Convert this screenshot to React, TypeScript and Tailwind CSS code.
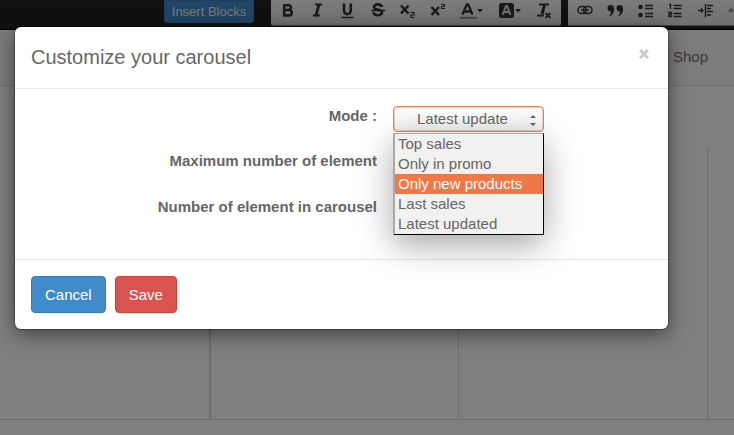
import React, { useState } from "react";

const modes = ["Top sales", "Only in promo", "Only new products", "Last sales", "Latest updated"];

function Tool({ label, children, width = "w-4" }: { label: string; children: React.ReactNode; width?: string }) {
  return (
    <button type="button" aria-label={label} className={`h-4 ${width} shrink-0 text-[#333]`}>
      {children}
    </button>
  );
}

function Icon({ children, w = 16 }: { children: React.ReactNode; w?: number }) {
  return (
    <svg width={w} height="16" viewBox={`0 0 ${w} 16`} fill="none" stroke="currentColor" strokeWidth="2" className="block">
      {children}
    </svg>
  );
}

function Toolbar() {
  return (
    <div className="flex h-[30px] items-start overflow-hidden border-b border-black bg-[#222]">
      <button
        type="button"
        className="ml-[164px] mr-[17px] h-[23px] w-[90px] shrink-0 whitespace-nowrap rounded-b-[3px] border border-[#357ebd] bg-[#428bca] text-[13px] leading-5 text-[#eee]"
      >
        Insert Blocks
      </button>
      <div className="mr-[7px] flex h-[26px] w-[290px] shrink-0 gap-[14px] rounded-b-[2px] border-b border-[#888] bg-linear-to-b from-[#f8f8f8] to-[#e0e0e0] pl-2 pt-[3px]">
        <Tool label="Bold">
          <Icon>
            <path d="M5.200 2v10.500M4 2.200h5.500a2.300 2.300 0 0 1 0 4.800H5h5a2.600 2.600 0 0 1 0 5.400H4" strokeWidth="2.600" />
          </Icon>
        </Tool>
        <Tool label="Italic">
          <Icon>
            <path d="M6 1.500h7M4 12.500h7" />
            <path d="M10 1.500 7 12.500" strokeWidth="2.800" />
          </Icon>
        </Tool>
        <Tool label="Underline">
          <Icon>
            <path d="M5 .5v7.300a3.200 3.200 0 0 0 6.800 0V.5" strokeWidth="2.600" />
            <path d="M2.500 14.500h12" strokeWidth="1.500" />
          </Icon>
        </Tool>
        <Tool label="Strikethrough">
          <Icon>
            <path d="M13 4C12 .5 5 .5 5 4c0 3.800 8 1.800 8 5.300 0 4-8 3.700-8.500 0" strokeWidth="2.600" />
            <path d="M2 7.500h14" strokeWidth="1.500" />
          </Icon>
        </Tool>
        <Tool label="Subscript">
          <Icon>
            <path d="m2 2.500 7.500 8M9.500 2.500l-7.500 8" strokeWidth="2.500" />
            <path d="M11.500 9.500H15V12h-3v2.500h3.500" strokeWidth="1.200" />
          </Icon>
        </Tool>
        <Tool label="Superscript">
          <Icon>
            <path d="m2.500 4 7.500 8M10 4l-7.500 8" strokeWidth="2.500" />
            <path d="M12 1.500h3.500v2h-3v2H16" strokeWidth="1.200" />
          </Icon>
        </Tool>
        <Tool label="Text colour" width="w-6">
          <Icon w={24}>
            <path d="M3.500 11.500 7.800 1.500h1.400l4.300 10M5 8.500h7" strokeWidth="2.300" />
            <path d="M1 14.800h17" stroke="#888" />
            <path d="M18 6h6l-3 3.500z" fill="currentColor" stroke="none" />
          </Icon>
        </Tool>
        <Tool label="Background colour" width="w-6">
          <Icon w={24}>
            <rect x="2" width="15" height="15" rx="2.500" fill="currentColor" stroke="none" />
            <path d="M5.500 12 9 3h1l3.500 9M7 9h5" stroke="#ddd" />
            <path d="M18 6h6l-3 3.500z" fill="currentColor" stroke="none" />
          </Icon>
        </Tool>
        <Tool label="Remove format">
          <Icon>
            <path d="M4 1.500h10M2 12.500h7" />
            <path d="M9.500 2 7 11" strokeWidth="3" />
            <path d="m10.500 10 5 5M15.500 10l-5 5" strokeWidth="1.800" />
          </Icon>
        </Tool>
      </div>
      <div className="flex h-[26px] flex-1 gap-[14px] overflow-hidden border-b border-[#888] bg-linear-to-b from-[#f8f8f8] to-[#e0e0e0] pl-[9px] pt-[3px]">
        <Tool label="Link">
          <Icon>
            <rect x="1" y="3.500" width="8.500" height="7" rx="3.500" strokeWidth="1.500" />
            <rect x="6.500" y="3.500" width="8.500" height="7" rx="3.500" strokeWidth="1.500" />
            <path d="M4 7h8" strokeWidth="1.400" />
          </Icon>
        </Tool>
        <Tool label="Quote">
          <Icon>
            <g fill="currentColor" stroke="none">
              <path d="M.5 5.500a3.200 3.200 0 0 1 6.500-.5c.8 4-2 8-5 8.500C3.500 11.500 4 10 4 8.500a3 3 0 0 1-3.500-3z" />
              <path d="M9.500 5.500A3.200 3.200 0 0 1 16 5c.8 4-2 8-5 8.500 1.500-2 2-3.500 2-5a3 3 0 0 1-3.500-3z" />
            </g>
          </Icon>
        </Tool>
        <Tool label="Bulleted list">
          <Icon>
            <circle cx="3.500" cy="4" r="2.300" fill="currentColor" stroke="none" />
            <circle cx="3.500" cy="12" r="2.300" fill="currentColor" stroke="none" />
            <path d="M8 2.500h8M8 5.500h8M8 10.500h8M8 13.500h8" strokeWidth="1.400" />
          </Icon>
        </Tool>
        <Tool label="Numbered list">
          <Icon>
            <path d="M2 1.500h1.500V6M1 9.500h3.500v2H2v2h3" strokeWidth="1.400" />
            <path d="M6.500 2.500h8M6.500 5.500h8M6.500 10.500h8M6.500 13.500h8" strokeWidth="1.400" />
          </Icon>
        </Tool>
        <Tool label="Decrease indent">
          <Icon>
            <path d="M1 7.500h4M8.500 1v13M10 2.500h6M10 5.500h4M10 8.500h6M10 12h4" strokeWidth="1.500" />
            <path d="m4 4.500 3 3-3 3z" fill="currentColor" stroke="none" />
          </Icon>
        </Tool>
        <Tool label="Increase indent">
          <Icon>
            <path d="M2 7.500h5M10 1v13" stroke="#999" strokeWidth="1.300" />
            <path d="m5 4.500-4 3 4 3z" fill="#999" stroke="none" />
          </Icon>
        </Tool>
      </div>
    </div>
  );
}

function CarouselDialog() {
  const [mode, setMode] = useState("Latest updated");
  const active = "Only new products";
  return (
    <section
      role="dialog"
      aria-labelledby="dialog-title"
      className="rounded-md bg-white text-[15px] leading-5 text-[#666] shadow-[0_5px_20px_rgba(0,0,0,0.5),0_0_1px_1px_rgba(0,0,0,0.3)]"
    >
      <header className="flex items-start justify-between border-b border-[#e5e5e5] px-4 pb-4 pt-[15px]">
        <h1 id="dialog-title" className="text-[20px] leading-[30px]">
          Customize your carousel
        </h1>
        <button type="button" aria-label="Close" className="flex h-6 w-4 items-center justify-center text-[#ccc]">
          <svg width="10" height="10" viewBox="0 0 10 10" stroke="currentColor" strokeWidth="3">
            <path d="m1 1 8 8M9 1 1 9" />
          </svg>
        </button>
      </header>
      <div className="grid h-[170px] grid-cols-[362px_151px] content-start gap-x-4 pt-[17px]">
        <label htmlFor="mode" className="h-[45px] text-right font-bold">
          Mode :
        </label>
        <div className="relative">
          <select
            id="mode"
            value={mode}
            onChange={(e) => setMode(e.target.value)}
            className="block h-[26px] w-full appearance-none rounded-[4px] border border-[#e8825a] bg-linear-to-b from-white to-[#f0f0f0] pl-[23px] pr-[35px] text-[15px] leading-5 text-[#666] shadow-[inset_0_0_1px_1px_rgba(240,119,70,0.35)] outline-none"
          >
            {modes.map((m) => (
              <option key={m}>{m}</option>
            ))}
          </select>
          <svg width="6" height="14" viewBox="0 0 6 14" fill="#666" className="pointer-events-none absolute right-2 top-[7px]">
            <path d="M0 5h6L3 2zM0 10h6L3 13z" />
          </svg>
          <ul
            role="listbox"
            aria-label="Mode"
            className="absolute left-0 top-[27px] w-full border border-l-2 border-b-black border-l-[#aaa] border-r-black border-t-[#aaa] bg-[#f2f1f0] shadow-[0_10px_32px_rgba(0,0,0,0.35)]"
          >
            {modes.map((m) => (
              <li
                key={m}
                role="option"
                aria-selected={m === active}
                onClick={() => setMode(m)}
                className={m === active ? "bg-[#f07746] px-[3px] text-white" : "px-[3px]"}
              >
                {m}
              </li>
            ))}
          </ul>
        </div>
        <p className="h-[46px] text-right font-bold">Maximum number of element</p>
        <span />
        <p className="text-right font-bold">Number of element in carousel</p>
      </div>
      <footer className="flex gap-[9px] border-t border-[#e5e5e5] p-4">
        <button type="button" className="h-[37px] rounded-[4px] border border-[#357ebd] bg-[#428bca] px-[13px] text-white">
          Cancel
        </button>
        <button type="button" className="h-[37px] rounded-[4px] border border-[#d43f3a] bg-[#d9534f] px-[13px] text-white">
          Save
        </button>
      </footer>
    </section>
  );
}

export default function App() {
  return (
    <div className="relative min-h-screen overflow-hidden bg-white font-['Liberation_Sans',Arial,sans-serif]">
      <Toolbar />
      <nav className="flex h-14 items-center justify-end border-b border-[#e0e0e0] bg-[#f8f8f8] pr-[26px] text-[15px] text-[#777]">
        <a href="#shop">Shop</a>
      </nav>
      <div className="mt-[62px] grid h-[272px] grid-cols-[211px_248px_249px_1fr] border-b border-[#ddd]">
        <div className="border-r-2 border-[#ddd]" />
        <div className="border-r border-[#ddd]" />
        <div className="border-r border-[#ddd]" />
      </div>
      <div className="absolute inset-0 bg-black/50 pl-[15px] pr-[66px] pt-[27px]">
        <CarouselDialog />
      </div>
    </div>
  );
}
